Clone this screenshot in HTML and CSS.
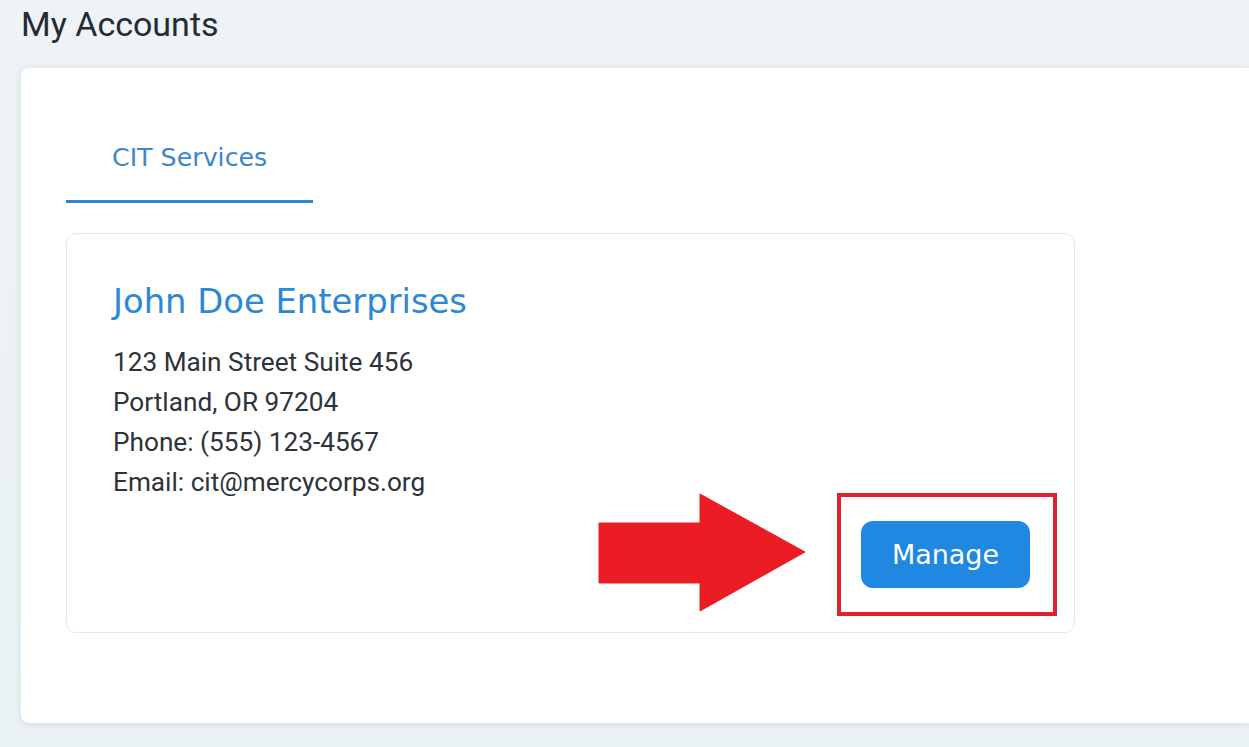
FILE: index.html
```html
<!DOCTYPE html>
<html lang="en">
<head>
<meta charset="utf-8">
<title>My Accounts</title>
<link rel="stylesheet" href="styles.css">
</head>
<body>
<main class="page">
  <h1 class="page-title">My Accounts</h1>
  <section class="panel">
    <nav class="tabs">
      <a class="tab tab-active">CIT Services</a>
    </nav>
    <article class="account-card">
      <h2 class="account-name">John Doe Enterprises</h2>
      <div class="account-info">
        <div>123 Main Street Suite 456</div>
        <div>Portland, OR 97204</div>
        <div>Phone: (555) 123-4567</div>
        <div>Email: cit@mercycorps.org</div>
      </div>
      <div class="account-actions">
        <div class="highlight-wrap">
          <svg class="callout-arrow" width="208" height="120" viewBox="0 0 208 120" aria-hidden="true">
            <polygon points="1,30 102,30 102,1 207,59 102,118 102,90 1,90" fill="#ec1c24" stroke="#ec1c24" stroke-width="1" stroke-linejoin="round"/>
          </svg>
          <span class="callout-box"></span>
          <button class="btn-manage">Manage</button>
        </div>
      </div>
    </article>
  </section>
</main>
</body>
</html>
```

FILE: styles.css
```css
* { box-sizing: border-box; }
html, body { margin: 0; padding: 0; }
body {
  background: linear-gradient(180deg, #edf3f7 0%, #eaf1f5 100%);
  font-family: Roboto, "Liberation Sans", Arial, sans-serif;
  color: #2b3038;
  width: 1249px;
  height: 747px;
  overflow: hidden;
}
.page {
  padding: 0 0 0 21px;
}
.page-title {
  margin: 0;
  padding: 4px 0 0 0;
  font-family: Roboto, "Liberation Sans", sans-serif;
  font-weight: 400;
  font-size: 34px;
  line-height: 40px;
  color: #252b33;
  height: 68px;
}
.panel {
  background: #ffffff;
  border-radius: 8px 0 0 8px;
  box-shadow: 0 1px 6px rgba(140, 160, 175, 0.25);
  padding: 45px 0 90px 45px;
  height: 655px;
}
.tabs {
  display: flex;
}
.tab {
  display: block;
  padding: 29px 46px 26px 46px;
  font-family: "DejaVu Sans", sans-serif;
  font-size: 25.3px;
  line-height: 32px;
  color: #3a87cc;
  border-bottom: 3px solid #2f86d0;
}
.account-card {
  margin-top: 30px;
  width: 1009px;
  border: 1px solid #e6e8ea;
  border-radius: 10px;
  padding: 44px 44px 44px 46px;
}
.account-name {
  margin: 0;
  font-family: "DejaVu Sans", sans-serif;
  font-weight: 400;
  font-size: 33.8px;
  line-height: 48px;
  color: #2c87d4;
}
.account-info {
  margin-top: 16px;
  font-family: Roboto, sans-serif;
  font-size: 26.2px;
  line-height: 40px;
  color: #2d333a;
}
.account-actions {
  display: flex;
  justify-content: flex-end;
  margin-top: 19px;
}
.highlight-wrap {
  position: relative;
}
.btn-manage {
  display: block;
  width: 169px;
  height: 67px;
  border: none;
  border-radius: 12px;
  background: #2088e0;
  color: #ffffff;
  font-family: "DejaVu Sans", sans-serif;
  font-size: 27px;
  font-weight: 400;
  padding: 0;
  cursor: pointer;
}
.callout-box {
  position: absolute;
  left: -24px;
  right: -27px;
  top: -28px;
  bottom: -28px;
  border: 4px solid #e0202c;
}
.callout-arrow {
  position: absolute;
  left: -263px;
  top: -28px;
}
```
